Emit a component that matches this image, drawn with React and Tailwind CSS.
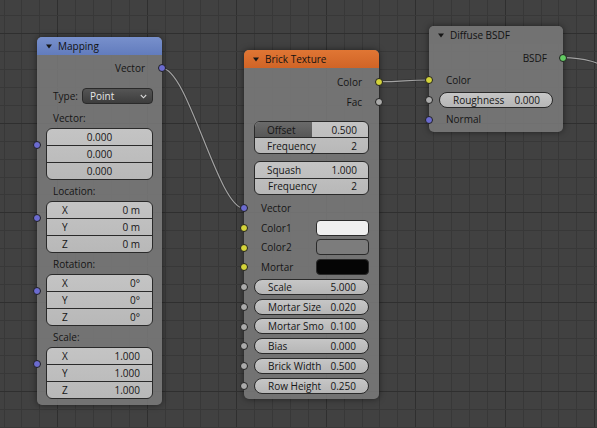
import React from "react";

const Tri = () => (
  <svg width="6" height="5" viewBox="0 0 6 5" className="shrink-0">
    <path d="M0 0.5 L6 0.5 L3 4.5 Z" fill="#161616" />
  </svg>
);

const Socket = ({ cls }) => (
  <div className={`absolute w-[8px] h-[8px] rounded-full border border-[#202020] ${cls}`} />
);

function Grid() {
  const xs = [];
  for (let i = 0; 3.5 + i * 17.9 < 597; i++) xs.push([Math.round(3.5 + i * 17.9) + 0.5, i % 5 === 3]);
  const ys = [];
  for (let i = 0; 15.4 + i * 17.9 < 428; i++) ys.push([Math.round(15.4 + i * 17.9) + 0.5, i % 5 === 1]);
  return (
    <svg className="absolute inset-0" width="597" height="428">
      {xs.map(([x, m], i) => (
        <line key={"x" + i} x1={x} y1="0" x2={x} y2="428" stroke={m ? "#2f2f2f" : "#383838"} strokeWidth="1" />
      ))}
      {ys.map(([y, m], i) => (
        <line key={"y" + i} x1="0" y1={y} x2="597" y2={y} stroke={m ? "#2f2f2f" : "#383838"} strokeWidth="1" />
      ))}
    </svg>
  );
}

function Links() {
  const paths = [
    "M162 68.3 C188 68.3 218 208.3 244 208.3",
    "M379 81.7 C404 81.7 404 80 429 80",
    "M563 57.7 C590 57.7 600 64 640 80",
  ];
  return (
    <svg className="absolute inset-0" width="597" height="428">
      {paths.map((d, i) => (
        <g key={i}>
          <path d={d} fill="none" stroke="rgba(20,20,20,0.25)" strokeWidth="2.6" />
          <path d={d} fill="none" stroke="#a2a2a2" strokeWidth="1.2" />
        </g>
      ))}
    </svg>
  );
}

const Label = ({ children }) => (
  <div className="mt-[4px] h-[14px] leading-[14px] pl-[16px] text-[#151515]">{children}</div>
);

const VecGroup = ({ rows, center }) => (
  <div className="relative mx-[9px] mt-[3px]">
    <Socket cls="left-[-13px] top-[13px] bg-[#6b6bd0]" />
    <div className="h-[52px] rounded-[6px] border border-[#2a2a2a] overflow-hidden flex flex-col bg-linear-to-b from-[#c4c4c4] to-[#b8b8b8] text-[#151515]">
      {rows.map(([l, v], i) => (
        <div
          key={i}
          className={`flex-1 flex items-center ${i > 0 ? "border-t border-[#2a2a2a]" : ""} ${center ? "justify-center" : "justify-between pl-[15px] pr-[12px]"}`}
        >
          {l !== null && <span>{l}</span>}
          <span>{v}</span>
        </div>
      ))}
    </div>
  </div>
);

function Mapping() {
  return (
    <div className="absolute left-[37px] top-[37px] w-[125px] h-[368px] rounded-[5px] bg-[rgba(122,122,122,0.88)] shadow-[0_0_6px_rgba(0,0,0,0.5)]">
      <div className="h-[18px] rounded-t-[5px] bg-linear-to-b from-[#7890cc] to-[#627cbd] flex items-center pl-[9px] text-[#111]">
        <Tri />
        <span className="ml-[6px]">Mapping</span>
      </div>
      <div className="relative mt-[3px] h-[20px] flex items-center justify-end pr-[17px] text-[#151515]">
        <span>Vector</span>
        <Socket cls="right-[-4px] top-[6px] bg-[#6b6bd0]" />
      </div>
      <div className="mt-[10px] h-[16px] flex items-center px-[9px] text-[#151515]">
        <span className="w-[36px] pl-[7px]">Type:</span>
        <div className="flex-1 h-full rounded-[4px] border border-[#2a2a2a] bg-linear-to-b from-[#555] to-[#3d3d3d] flex items-center justify-between pl-[7px] pr-[5px] text-[#e6e6e6]">
          <span>Point</span>
          <svg width="7" height="5" viewBox="0 0 7 5">
            <path d="M0.8 1 L3.5 3.8 L6.2 1" fill="none" stroke="#d8d8d8" strokeWidth="1.1" />
          </svg>
        </div>
      </div>
      <div className="mt-[7px] h-[14px] leading-[14px] pl-[16px] text-[#151515]">Vector:</div>
      <VecGroup center rows={[[null, "0.000"], [null, "0.000"], [null, "0.000"]]} />
      <Label>Location:</Label>
      <VecGroup rows={[["X", "0 m"], ["Y", "0 m"], ["Z", "0 m"]]} />
      <Label>Rotation:</Label>
      <VecGroup rows={[["X", "0°"], ["Y", "0°"], ["Z", "0°"]]} />
      <Label>Scale:</Label>
      <VecGroup rows={[["X", "1.000"], ["Y", "1.000"], ["Z", "1.000"]]} />
    </div>
  );
}

const OutRow = ({ label, sock, first, pr }) => (
  <div className={`relative h-[20px] flex items-center justify-end ${first ? "mt-[4px]" : ""} ${pr} text-[#151515]`}>
    <span>{label}</span>
    <Socket cls={`right-[-4px] top-[6px] ${sock}`} />
  </div>
);

const InRow = ({ label, sock, children }) => (
  <div className="relative h-[19.75px] flex items-center text-[#151515]">
    <Socket cls={`left-[-4px] top-[6px] ${sock}`} />
    {children ? children : <span className="pl-[17px]">{label}</span>}
  </div>
);

const Field = ({ label, value }) => (
  <div className="mx-[10px] flex-1 h-[16px] rounded-full border border-[#2a2a2a] bg-linear-to-b from-[#c6c6c6] to-[#b6b6b6] flex items-center justify-between pl-[13px] pr-[12px] text-[#151515]">
    <span>{label}</span>
    <span>{value}</span>
  </div>
);

const ColorRow = ({ label, swatch }) => (
  <InRow sock="bg-[#d4d43a]">
    <span className="pl-[17px] flex-1">{label}</span>
    <div className={`mr-[10px] w-[53px] h-[16px] rounded-[4px] border border-[#2a2a2a] ${swatch}`} />
  </InRow>
);

function Brick() {
  return (
    <div className="absolute left-[244px] top-[50px] w-[135px] h-[349px] rounded-[5px] bg-[rgba(122,122,122,0.88)] shadow-[0_0_6px_rgba(0,0,0,0.5)]">
      <div className="h-[18px] rounded-t-[5px] bg-linear-to-b from-[#e07634] to-[#d06426] flex items-center pl-[9px] text-[#111]">
        <Tri />
        <span className="ml-[6px]">Brick Texture</span>
      </div>
      <OutRow first label="Color" sock="bg-[#d4d43a]" pr="pr-[17px]" />
      <OutRow label="Fac" sock="bg-[#ababab]" pr="pr-[17px]" />
      <div className="mx-[10px] mt-[9px] h-[33px] rounded-[6px] border border-[#2a2a2a] overflow-hidden flex flex-col bg-linear-to-b from-[#c4c4c4] to-[#b8b8b8] text-[#151515]">
        <div className="relative flex-1 flex items-center justify-between pl-[12px] pr-[11px]">
          <div className="absolute left-0 top-0 bottom-0 w-1/2 bg-linear-to-b from-[#6a6a6a] to-[#575757]" />
          <span className="relative">Offset</span>
          <span className="relative">0.500</span>
        </div>
        <div className="flex-1 flex items-center justify-between pl-[12px] pr-[11px] border-t border-[#2a2a2a]">
          <span>Frequency</span>
          <span>2</span>
        </div>
      </div>
      <div className="mx-[10px] mt-[7px] h-[34px] rounded-[6px] border border-[#2a2a2a] overflow-hidden flex flex-col bg-linear-to-b from-[#c4c4c4] to-[#b8b8b8] text-[#151515]">
        <div className="flex-1 flex items-center justify-between pl-[12px] pr-[11px]">
          <span>Squash</span>
          <span>1.000</span>
        </div>
        <div className="flex-1 flex items-center justify-between pl-[13px] pr-[11px] border-t border-[#2a2a2a]">
          <span>Frequency</span>
          <span>2</span>
        </div>
      </div>
      <div className="mt-[3px]">
        <InRow label="Vector" sock="bg-[#6b6bd0]" />
        <ColorRow label="Color1" swatch="bg-[#efefef]" />
        <ColorRow label="Color2" swatch="bg-[#7c7c7c]" />
        <ColorRow label="Mortar" swatch="bg-[#050505]" />
        <InRow sock="bg-[#ababab]"><Field label="Scale" value="5.000" /></InRow>
        <InRow sock="bg-[#ababab]"><Field label="Mortar Size" value="0.020" /></InRow>
        <InRow sock="bg-[#ababab]"><Field label="Mortar Smo" value="0.100" /></InRow>
        <InRow sock="bg-[#ababab]"><Field label="Bias" value="0.000" /></InRow>
        <InRow sock="bg-[#ababab]"><Field label="Brick Width" value="0.500" /></InRow>
        <InRow sock="bg-[#ababab]"><Field label="Row Height" value="0.250" /></InRow>
      </div>
    </div>
  );
}

function Diffuse() {
  return (
    <div className="absolute left-[429px] top-[26px] w-[134px] h-[106px] rounded-[5px] bg-[rgba(122,122,122,0.88)] shadow-[0_0_6px_rgba(0,0,0,0.5)]">
      <div className="h-[18px] rounded-t-[5px] bg-[rgba(114,114,114,0.9)] flex items-center pl-[9px] text-[#111]">
        <Tri />
        <span className="ml-[6px]">Diffuse BSDF</span>
      </div>
      <OutRow first label="BSDF" sock="bg-[#63cc63]" pr="pr-[16px]" />
      <div className="mt-[2px]">
        <InRow label="Color" sock="bg-[#d4d43a]" />
        <InRow sock="bg-[#ababab]"><Field label="Roughness" value="0.000" /></InRow>
        <InRow label="Normal" sock="bg-[#6b6bd0]" />
      </div>
    </div>
  );
}

export default function App() {
  return (
    <div className="relative w-[597px] h-[428px] overflow-hidden bg-[#414141] font-['Open_Sans',sans-serif] text-[10px] leading-none">
      <Grid />
      <Links />
      <Mapping />
      <Brick />
      <Diffuse />
    </div>
  );
}
